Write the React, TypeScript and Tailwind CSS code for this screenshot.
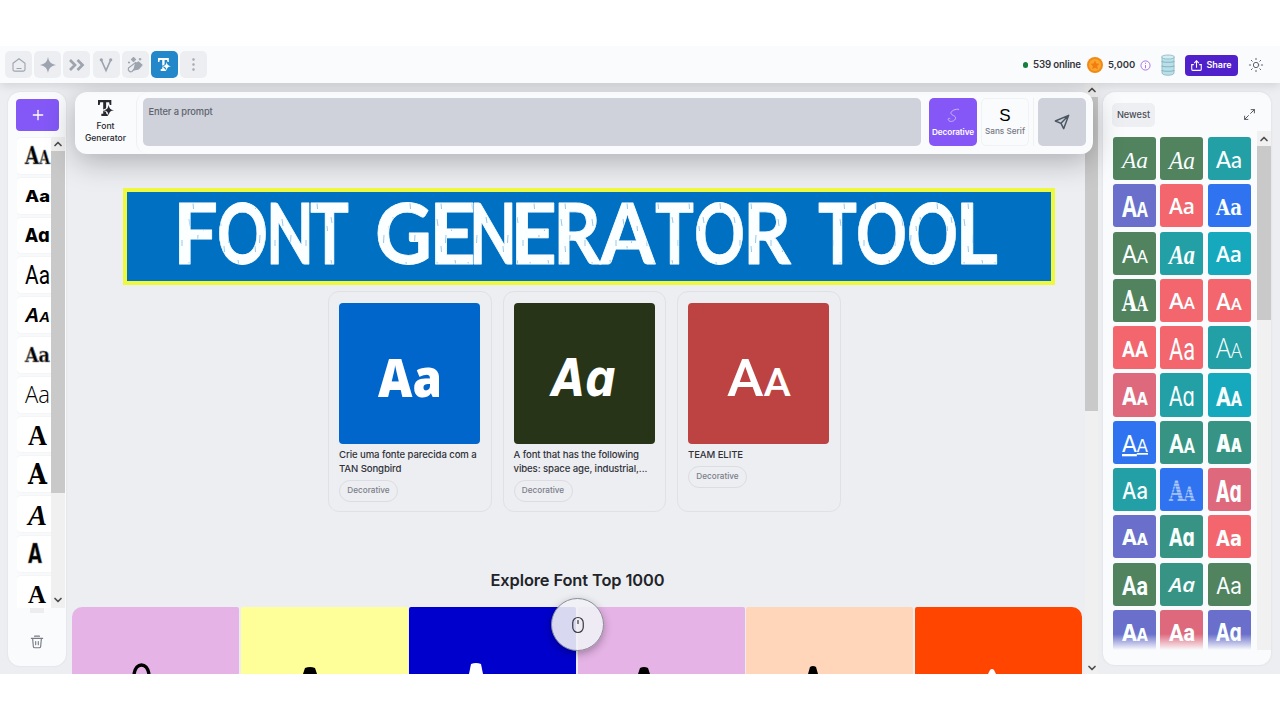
import type { ReactNode } from "react";
import { ChevronDown, ChevronUp, EllipsisVertical, Maximize2, Mouse, Plus, Sun } from "lucide-react";

type Sample = {
  text: string;
  font: string; // font classes of the specimen
  size: number;
  small?: boolean; // second letter is a small capital
  width?: number;
  bg?: string;
  fill?: string;
  outline?: boolean;
};

const sans = "font-['Inter',sans-serif]";
const lib = "font-['Liberation_Sans',sans-serif]";
const roboto = "font-['Roboto',sans-serif]";
const lato = "font-['Lato',sans-serif]";
const open = "font-['Open_Sans',sans-serif]";
const serif = "font-['Liberation_Serif',serif]";
const slab = "font-['DejaVu_Serif',serif]";
const dejavu = "font-['DejaVu_Sans',sans-serif]";

const history: Sample[] = [
  { text: "AA", small: true, font: `${slab} font-bold`, size: 24, outline: true },
  { text: "Aa", font: `${sans} font-extrabold`, size: 16 },
  { text: "Aɑ", font: `${dejavu} font-bold`, size: 20 },
  { text: "Aa", font: `${roboto} font-normal`, size: 25 },
  { text: "AA", small: true, font: `${lib} font-bold italic`, size: 20 },
  { text: "Aa", font: `${slab} font-bold`, size: 20, outline: true },
  { text: "Aa", font: `${open} font-light`, size: 24 },
  { text: "A", font: `${serif} font-bold`, size: 29, width: 19 },
  { text: "A", font: `${slab} font-bold`, size: 28, width: 19 },
  { text: "A", font: `${serif} font-bold italic`, size: 30, width: 19 },
  { text: "A", font: `${dejavu} font-bold`, size: 26, width: 14, outline: true },
  { text: "A", font: `${serif} font-bold`, size: 26, width: 18 },
];

const green = "bg-[#51835f]";
const teal = "bg-[#22a0a6]";
const cyan = "bg-[#16a9bd]";
const violet = "bg-[#696fca]";
const coral = "bg-[#f3666e]";
const blue = "bg-[#3073f0]";
const rose = "bg-[#df697c]";
const jade = "bg-[#379485]";

const newest: Sample[] = [
  { text: "Aa", bg: green, font: `${serif} font-normal italic`, size: 24 },
  { text: "Aa", bg: green, font: `${serif} font-normal italic`, size: 25 },
  { text: "Aa", bg: teal, font: `${lato} font-medium`, size: 23 },
  { text: "AA", small: true, bg: violet, font: `${open} font-bold`, size: 28 },
  { text: "Aa", bg: coral, font: `${open} font-semibold`, size: 21 },
  { text: "Aa", bg: blue, font: `${slab} font-bold`, size: 22 },
  { text: "AA", small: true, bg: green, font: `${lato} font-medium`, size: 24 },
  { text: "Aa", bg: teal, font: `${serif} font-bold italic`, size: 27 },
  { text: "Aa", bg: cyan, font: `${open} font-semibold`, size: 21 },
  { text: "AA", small: true, bg: green, font: `${slab} font-bold`, size: 27 },
  { text: "AA", small: true, bg: coral, font: `${open} font-semibold`, size: 21 },
  { text: "AA", small: true, bg: coral, font: `${roboto} font-medium`, size: 23 },
  { text: "AA", bg: coral, font: `${roboto} font-bold`, size: 22 },
  { text: "Aa", bg: coral, font: `${roboto} font-normal`, size: 31 },
  { text: "AA", small: true, bg: teal, font: `${open} font-light`, size: 27 },
  { text: "AA", small: true, bg: rose, font: `${dejavu} font-bold`, size: 24 },
  { text: "Aɑ", bg: teal, font: `${dejavu} font-normal`, size: 26 },
  { text: "AA", small: true, bg: cyan, font: `${roboto} font-extrabold`, size: 26 },
  { text: "AA", small: true, bg: blue, font: `${dejavu} font-normal underline`, size: 23 },
  { text: "AA", small: true, bg: jade, font: `${roboto} font-bold`, size: 26 },
  { text: "AA", small: true, bg: jade, font: `${sans} font-black`, size: 25 },
  { text: "Aa", bg: teal, font: `${sans} font-medium`, size: 23 },
  { text: "AA", small: true, bg: blue, font: `${slab} font-bold`, size: 28, fill: "url(#stripes)" },
  { text: "Aɑ", bg: rose, font: `${dejavu} font-bold`, size: 30 },
  { text: "AA", small: true, bg: violet, font: `${dejavu} font-bold`, size: 21 },
  { text: "Aɑ", bg: jade, font: `${dejavu} font-bold`, size: 24 },
  { text: "Aa", bg: coral, font: `${dejavu} font-bold`, size: 22 },
  { text: "Aa", bg: green, font: `${roboto} font-bold`, size: 26 },
  { text: "Aa", bg: jade, font: `${open} font-semibold italic`, size: 20 },
  { text: "Aa", bg: green, font: `${sans} font-normal`, size: 23 },
  { text: "AA", small: true, bg: violet, font: `${dejavu} font-bold`, size: 23 },
  { text: "Aa", bg: rose, font: `${roboto} font-extrabold`, size: 24 },
  { text: "Aɑ", bg: violet, font: `${dejavu} font-bold`, size: 24 },
];

const featured = [
  { title: ["Crie uma fonte parecida com a", "TAN Songbird"], bg: "bg-[#0066cc]", text: "Aa", font: `${open} font-extrabold`, size: 53 },
  { title: ["A font that has the following", "vibes: space age, industrial,..."], bg: "bg-[#283417]", text: "Aɑ", font: `${dejavu} font-bold italic`, size: 52 },
  { title: ["TEAM ELITE"], bg: "bg-[#bd4342]", text: "AA", small: true, font: `${roboto} font-medium`, size: 52 },
];

// [letter, x, advance]
const bannerWords: [string, number, number][][] = [
  [["F", 173, 45], ["O", 217, 51], ["N", 266, 48], ["T", 310, 39]],
  [["G", 375, 57], ["E", 429, 47], ["N", 469, 48], ["E", 510, 47], ["R", 553, 48], ["A", 600, 55], ["T", 655, 39], ["O", 694, 51], ["R", 743, 48]],
  [["T", 818, 39], ["O", 856, 51], ["O", 907, 51], ["L", 955, 43]],
];

const top1000 = [
  { bg: "bg-[#e5b3e6]", color: "fill-black", x: 69, top: 57, cap: 4 },
  { bg: "bg-[#ffff99]", color: "fill-black", x: 69, top: 60, cap: 5 },
  { bg: "bg-[#0000cc]", color: "fill-white", x: 67, top: 56, cap: 5 },
  { bg: "bg-[#e5b3e6]", color: "fill-black", x: 66, top: 60, cap: 4 },
  { bg: "bg-[#ffd6ba]", color: "fill-black", x: 67, top: 59, cap: 3 },
  { bg: "bg-[#ff4500]", color: "fill-white", x: 77, top: 62, cap: 2 },
];

function Specimen({ text, font, size, small, width = 26, fill = "currentColor", outline }: Sample) {
  const height = Math.round(size * 0.72);
  return (
    <svg width={width} height={height} className="shrink-0 overflow-visible">
      <text
        x="0"
        y={height}
        textLength={width}
        lengthAdjust="spacingAndGlyphs"
        fontSize={size}
        fill={fill}
        className={font}
        stroke={outline ? "#8a8a8a" : "none"}
        strokeWidth={outline ? 0.7 : 0}
      >
        {small ? (
          <>
            {text[0]}
            <tspan fontSize={size * 0.75}>{text[1]}</tspan>
          </>
        ) : (
          text
        )}
      </text>
    </svg>
  );
}

function FontToolIcon({ className }: { className: string }) {
  return (
    <svg viewBox="0 0 24 24" fill="currentColor" className={className}>
      <path d="M0 0h20v7.500h-2.500L16.700 3.500h-4.500V20.500H15V24H5v-3.500h2.800V3.500H3.300l-.8 4H0z" stroke="none" />
      <path
        d="M16 7c.9 5.500 2.500 7.300 8 8.200-5.500.9-7.100 2.700-8 8.200-.9-5.500-2.500-7.300-8-8.200 5.500-.9 7.100-2.700 8-8.200z"
        strokeWidth="2.500"
        paintOrder="stroke"
      />
    </svg>
  );
}

function NavButton({ children, active }: { children: ReactNode; active?: boolean }) {
  return (
    <button
      className={
        active
          ? "flex size-[27px] items-center justify-center rounded-[5px] bg-[#2388c9] text-white"
          : "flex size-[27px] items-center justify-center rounded-[5px] bg-[#edeef2] text-[#9da3af]"
      }
    >
      {children}
    </button>
  );
}

function Header() {
  return (
    <header className="relative z-20 flex h-[37px] shrink-0 items-center justify-between bg-[#fafbfd] pl-[5px] pr-4 shadow-[0_2px_10px_rgba(0,0,0,0.13)]">
      <nav className="flex gap-[2.200px]">
        <NavButton>
          <svg viewBox="0 0 16 16" className="size-4" fill="none" stroke="currentColor" strokeWidth="1.100">
            <path d="M2 6.300 8 1.800l6 4.500v6.200c0 1-.6 1.600-1.600 1.600H3.600c-1 0-1.600-.6-1.600-1.600zM5.500 11.500h5" />
          </svg>
        </NavButton>
        <NavButton>
          <svg viewBox="0 0 16 16" className="size-4" fill="currentColor">
            <path d="M8 0c1 5 3 7 8 8-5 1-7 3-8 8-1-5-3-7-8-8 5-1 7-3 8-8z" />
          </svg>
        </NavButton>
        <NavButton>
          <svg viewBox="0 0 16 16" className="size-4" fill="none" stroke="currentColor" strokeWidth="2.700">
            <path d="m1 3 5 5-5 5M8.500 3l5 5-5 5" />
          </svg>
        </NavButton>
        <NavButton>
          <svg viewBox="0 0 16 16" className="size-4" fill="none" stroke="currentColor" strokeWidth="1.700">
            <path d="m3.500 3.500 4.500 10 4.500-10" />
            <circle cx="3.300" cy="2.800" r="0.800" />
            <circle cx="12.700" cy="2.800" r="0.800" />
          </svg>
        </NavButton>
        <NavButton>
          <svg viewBox="0 0 16 16" className="size-4" fill="none" stroke="currentColor" strokeWidth="1.200">
            <path d="m1.500 11 7-5.500 2 3L5 14.500c-2 1-4.500-1-3.500-3.500z" />
            <path d="m8.500 6.500 3-1.500 3.500 3-3.500 4-4.500 1z" fill="currentColor" />
            <path d="M6.500 0c.3 1.700.8 2.200 2.500 2.500-1.700.3-2.200.8-2.500 2.500C6.200 3.300 5.700 2.800 4 2.500 5.700 2.200 6.200 1.700 6.500 0z" fill="currentColor" />
            <path d="M2 4.500v2M1 5.500h2M13 1v2.500M11.800 2.200h2.500" />
          </svg>
        </NavButton>
        <NavButton active>
          <FontToolIcon className="size-[13px] stroke-[#2388c9]" />
        </NavButton>
        <NavButton>
          <EllipsisVertical className="size-[17px]" strokeWidth={1.500} />
        </NavButton>
      </nav>
      <div className="flex items-center pt-px text-[10px] font-semibold text-[#34363b]">
        <span className="size-[5.500px] rounded-full bg-[#15803d]" />
        <span className="ml-[5px] w-[47px] whitespace-nowrap text-[9.700px] tracking-[-0.150px]">539 online</span>
        <svg viewBox="0 0 16 16" className="ml-[7px] size-4">
          <circle cx="8" cy="8" r="8" fill="#f08a15" />
          <circle cx="8" cy="8" r="6" fill="#fba52b" />
          <path d="m8 3.500 1.400 2.900 3.100.4-2.300 2.200.6 3.200L8 10.700l-2.800 1.500.6-3.200-2.300-2.200 3.100-.4z" fill="#f37b13" />
        </svg>
        <span className="ml-[5px] w-[27px] text-[9.500px]">5,000</span>
        <svg viewBox="0 0 12 12" className="ml-[5px] size-[11px]" fill="none" stroke="#a56be4">
          <circle cx="6" cy="6" r="5" />
          <path d="M6 5.500V9M6 3v1.200" />
        </svg>
        <svg viewBox="0 0 16 22" className="ml-[9px] h-[22px] w-4" stroke="#86b5c1" strokeWidth="0.800">
          <path d="M2 3v16c0 3 12 3 12 0V3" fill="#b9dfe8" />
          <ellipse cx="8" cy="3" rx="6.500" ry="2" fill="#d5edf2" />
          <path d="M1.500 7.500c2 1 11 1 13 0M1.500 12c2 1 11 1 13 0M1.500 16.500c2 1 11 1 13 0" fill="none" strokeWidth="1.100" />
        </svg>
        <button className="ml-[9px] flex h-[21px] w-[53px] items-center justify-center gap-1 rounded-[4px] bg-[#5020cb] text-[9px] text-white">
          <svg viewBox="0 0 12 12" className="size-[11px]" fill="none" stroke="currentColor" strokeWidth="1.200">
            <path d="M3 5H.8v5.200c0 .7.400 1.100 1.100 1.100h8.200c.7 0 1.100-.4 1.100-1.100V5H9M6 8.500V1M3.500 3.300 6 .8l2.500 2.500" />
          </svg>
          Share
        </button>
        <Sun className="ml-[10px] size-4 text-[#60646c]" strokeWidth={1.500} />
      </div>
    </header>
  );
}

function Sidebar() {
  return (
    <aside className="mt-[9px] ml-2 flex h-[574px] w-[58px] shrink-0 flex-col rounded-[12px] bg-[#fafbfd] shadow-[0_0_2px_rgba(0,0,0,0.1)]">
      <button className="mt-[7px] ml-2 flex h-8 w-[43px] shrink-0 items-center justify-center rounded-[4px] bg-[#8358f6] text-white">
        <Plus className="size-4" strokeWidth={2} />
      </button>
      <div className="mt-[6px] flex h-[471px] shrink-0">
        <div className="ml-[9px] flex w-[34px] flex-col gap-1 overflow-hidden pt-px">
          {history.map((sample, i) => (
            <div
              key={i}
              className={
                sample.width
                  ? "flex h-[35.800px] w-10 shrink-0 items-center rounded-[4px] bg-white pl-[11px] text-black shadow-[0_0_3px_rgba(0,0,0,0.07)]"
                  : "flex h-[35.800px] w-10 shrink-0 items-center rounded-[4px] bg-white pl-2 text-black shadow-[0_0_3px_rgba(0,0,0,0.07)]"
              }
            >
              <Specimen {...sample} width={sample.width ?? 25} />
            </div>
          ))}
        </div>
        <div className="flex w-[14px] flex-col items-center bg-[#f0f0f1]">
          <ChevronUp className="mt-px mb-px size-3 shrink-0 text-[#505050]" strokeWidth={3.500} />
          <div className="h-[342px] w-full bg-[#c9c9ca]" />
          <ChevronDown className="mt-auto mb-[2px] size-3 shrink-0 text-[#505050]" strokeWidth={3.500} />
        </div>
      </div>
      <div className="flex h-[5px] shrink-0 justify-center">
        <span className="h-[5px] w-[14px] bg-[#ededf0]" />
      </div>
      <div className="flex flex-1 items-center justify-center pt-[4px]">
        <svg viewBox="0 0 16 16" className="size-[14px] text-[#777b83]" fill="none" stroke="currentColor" strokeWidth="1.300" strokeLinecap="round">
          <path d="M1.500 3.800h13M5.200 1.300h5.600M3 4l.8 9c.1 1 .7 1.600 1.700 1.600h5c1 0 1.600-.6 1.700-1.600l.8-9M6.500 7.500v3.500M9.500 7.500v3.500" />
        </svg>
      </div>
    </aside>
  );
}

function PromptBar() {
  return (
    <div className="absolute top-[9px] left-[75px] z-10 flex h-[62px] w-[1018px] rounded-[12px] bg-[#fafbfd] shadow-[0_7px_30px_rgba(0,0,0,0.28)]">
      <div className="flex w-[61px] flex-col items-center pt-[8px] text-center text-[8.600px] leading-[12px] font-medium text-[#27292e]">
        <FontToolIcon className="mb-[4px] size-4 stroke-[#fafbfd]" />
        Font
        <br />
        Generator
      </div>
      <div className="flex flex-1 rounded-[12px] border-l border-[#eff0f3] pt-[6px] pl-[6px]">
        <div className="h-12 w-[778px] rounded-[5px] bg-[#cfd2da] pt-[6px] pl-[5.500px] text-[9.300px] leading-[15px] font-medium tracking-[-0.100px] text-[#5d626d]">
          Enter a prompt
        </div>
        <div className="ml-2 flex h-12 w-12 flex-col items-center rounded-[5px] bg-[#8557f7] pt-[10px] text-[8.200px] leading-[10px] font-semibold tracking-[-0.100px] text-white">
          <svg viewBox="0 0 14 16" className="mb-[4px] h-[15px] w-[13px]" fill="none" stroke="#d4c5ff" strokeWidth="0.900">
            <path d="M13 1.500C9.500.5 4 3 4.200 5.500s5.600 2.500 5 5.500-5.400 4.500-7.200 2.500 0-3 1.500-2" />
          </svg>
          Decorative
        </div>
        <div className="ml-1 flex h-12 w-12 flex-col items-center rounded-[5px] border border-[#f1f2f5] pt-[7px] text-[8.200px] leading-[10px] font-medium whitespace-nowrap text-[#757983]">
          <span className="mb-px font-['Liberation_Sans',sans-serif] text-[17px] leading-[19px] font-normal text-black">S</span>
          Sans Serif
        </div>
        <div className="ml-1 h-12 w-px bg-[#f0f1f4]" />
        <button className="ml-1 flex size-12 items-center justify-center rounded-[5px] bg-[#cfd2da]">
          <svg viewBox="0 0 24 24" className="mr-px size-4 text-[#4b5663]" fill="none" stroke="currentColor" strokeWidth="2.200" strokeLinejoin="round">
            <path d="M22 2 2 10.500l8.500 3.500L14.500 22zM22 2 10.500 14" />
          </svg>
        </button>
      </div>
    </div>
  );
}

function Banner() {
  return (
    <div className="absolute top-[105px] left-[123px] z-10 h-[97px] w-[932px] border-4 border-[#eef83d] bg-[#0070c2]">
      <svg width="924" height="89" viewBox="127 192 924 89">
        <defs>
          <pattern id="scratches" width="31" height="43" patternUnits="userSpaceOnUse">
            <rect width="31" height="43" fill="#fbffff" />
            <path
              d="M3 4l1 7M12 20l-.5 8M21 2l1 6M27 25v6M7 31l.5 6M17 11l.5 5"
              stroke="#5b9fd6"
              strokeWidth="0.600"
            />
          </pattern>
        </defs>
        {bannerWords.map((word, i) => (
          <text
            key={i}
            y="264"
            fontSize="85"
            fill="url(#scratches)"
            stroke="#fbffff"
            strokeWidth="0.800"
            strokeLinejoin="round"
            className="font-['Lato',sans-serif] font-bold"
          >
            {word.map(([letter, x, advance]) => (
              <tspan key={x} x={x} textLength={advance} lengthAdjust="spacingAndGlyphs">
                {letter}
              </tspan>
            ))}
          </text>
        ))}
      </svg>
    </div>
  );
}

function Main() {
  return (
    <main className="flex h-full w-[1018px] shrink-0 flex-col items-center">
      <div className="mt-[208px] flex w-full gap-[11px] pl-[261px]">
        {featured.map(({ title, bg, ...sample }) => (
          <article key={title[0]} className="h-[221px] w-[163.500px] rounded-[11px] border border-[#e0e1e5] px-[10px] pt-[11px]">
            <div className={`flex h-[141px] w-[141px] items-center justify-center rounded-[4px] pt-[8px] text-white ${bg}`}>
              <Specimen {...sample} width={64} />
            </div>
            <div className="mt-[4px] text-[9.600px] leading-[14px] font-medium tracking-[-0.100px] whitespace-nowrap text-[#303238]">
              {title.map((line) => (
                <p key={line}>{line}</p>
              ))}
            </div>
            <span className="mt-[3.500px] flex h-[22px] w-[59px] items-center justify-center rounded-full border border-[#dcdde2] text-[8.200px] font-medium text-[#7a7e89]">
              Decorative
            </span>
          </article>
        ))}
      </div>
      <h2 className="mt-[56px] ml-[3px] text-[16.400px] leading-6 font-semibold tracking-[-0.100px] text-[#222429]">Explore Font Top 1000</h2>
      <div className="mt-[15px] mr-[3px] ml-[5px] flex h-[67px] w-[1010px] gap-[1.500px] self-start overflow-hidden rounded-t-[10px]">
        {top1000.map((item, i) => (
          <div key={i} className={`flex-1 rounded-t-[2px] ${item.bg}`}>
            <svg width="167" height="67" className={item.color}>
              {i === 0 ? (
                <path d="M62 67c2-12 13-12 15 0" fill="none" stroke="black" strokeWidth="3.500" />
              ) : (
                <path
                  d={`M${item.x - item.cap - 2} 67L${item.x - item.cap} ${item.top + 1}Q${item.x} ${item.top - 1} ${item.x + item.cap} ${item.top + 1}L${item.x + item.cap + 2} 67z`}
                />
              )}
            </svg>
          </div>
        ))}
      </div>
    </main>
  );
}

function NewestPanel() {
  return (
    <aside className="mt-[9px] ml-[5px] h-[573px] w-[168px] shrink-0 rounded-[12px] bg-[#fafbfd] shadow-[0_0_3px_rgba(0,0,0,0.08)]">
      <div className="flex h-[39px] items-start justify-between pt-[11px] pr-[15px] pl-[9px]">
        <button className="h-6 w-[43px] rounded-[5px] bg-[#eeeff2] text-[9.200px] font-medium text-[#494d56]">Newest</button>
        <Maximize2 className="mt-[5px] size-[13px] text-[#50545c]" strokeWidth={1.800} />
      </div>
      <div className="flex h-[519px]">
        <div className="relative h-[519px] w-[154px] overflow-hidden pt-[6px] pl-[10px]">
          <svg width="0" height="0" className="absolute">
            <pattern id="stripes" width="4" height="3" patternUnits="userSpaceOnUse">
              <rect width="4" height="3" fill="#6e9ff5" />
              <rect width="4" height="1.700" fill="#a9c7fb" />
            </pattern>
          </svg>
          <div className="grid grid-cols-[43.200px_43.200px_43.200px] gap-[4.100px]">
            {newest.map((sample, i) => (
              <div key={i} className={`flex h-[43.200px] items-center justify-center rounded-[3px] pt-[2px] text-[#f9ffff] ${sample.bg}`}>
                <Specimen {...sample} />
              </div>
            ))}
          </div>
          <div className="absolute inset-x-0 bottom-0 h-4 bg-linear-to-b from-[#fafbfd]/0 to-[#fafbfd]" />
        </div>
        <div className="flex w-[14px] flex-col items-center bg-[#f1f1f2]">
          <ChevronUp className="mt-[2px] mb-px size-3 shrink-0 text-[#505050]" strokeWidth={3.500} />
          <div className="h-[174px] w-full bg-[#c9c9ca]" />
        </div>
      </div>
    </aside>
  );
}

export default function App() {
  return (
    <div className="h-[720px] w-[1280px] overflow-hidden bg-white pt-[46px] font-['Inter',sans-serif]">
      <div className="flex h-[628px] flex-col overflow-hidden bg-[#edeef2]">
        <Header />
        <div className="relative flex h-[591px]">
          <Sidebar />
          <div className="w-px shrink-0" />
          <Main />
          <div className="flex h-full w-[13px] shrink-0 flex-col items-center bg-[#f0f0f0]">
            <ChevronUp className="mt-px mb-px size-3 shrink-0 text-[#505050]" strokeWidth={3.500} />
            <div className="h-[314px] w-full bg-[#c9c9ca]" />
            <ChevronDown className="mt-auto size-3 shrink-0 text-[#505050]" strokeWidth={3.500} />
          </div>
          <NewestPanel />
          <PromptBar />
          <Banner />
          <div className="absolute top-[515px] left-[551px] z-10 flex size-[53px] items-center justify-center rounded-full border border-[#898b98] bg-[#f0f1f5]/90 text-[#36383d] shadow-[0_3px_9px_rgba(0,0,0,0.3)]">
            <Mouse className="size-[18px]" strokeWidth={1.600} />
          </div>
        </div>
      </div>
    </div>
  );
}
